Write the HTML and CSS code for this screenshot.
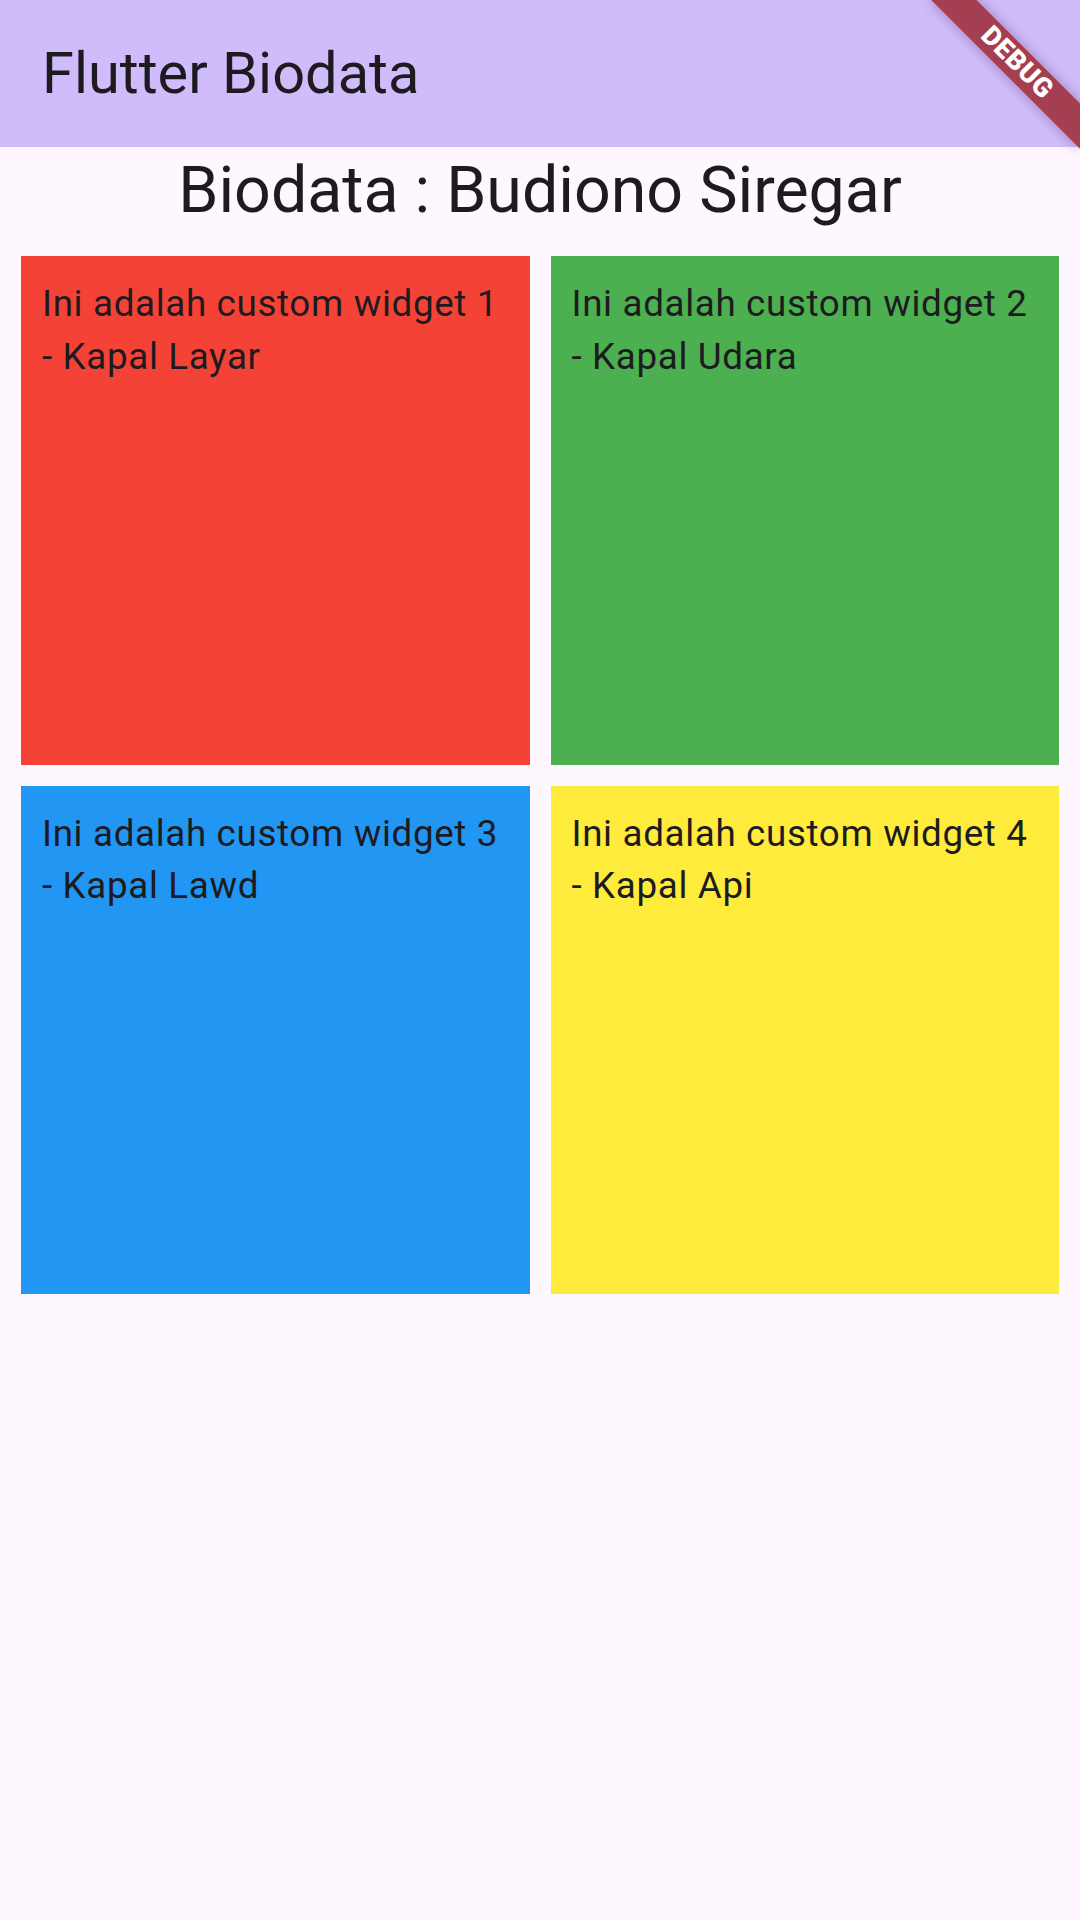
FILE: index.html
```html
<!DOCTYPE html>
<html>
<head>
<meta charset="utf-8">
<link rel="stylesheet" href="styles.css">
</head>
<body>
<div class="screen">
  <header class="appbar">
    <h1 class="appbar-title">Flutter Biodata</h1>
  </header>
  <h2 class="heading">Biodata : Budiono Siregar</h2>
  <main class="grid">
    <div class="card card-red"><p class="card-text">Ini adalah custom widget 1 - Kapal Layar</p></div>
    <div class="card card-green"><p class="card-text">Ini adalah custom widget 2 - Kapal Udara</p></div>
    <div class="card card-blue"><p class="card-text">Ini adalah custom widget 3 - Kapal Lawd</p></div>
    <div class="card card-yellow"><p class="card-text">Ini adalah custom widget 4 - Kapal Api</p></div>
  </main>
  <div class="debug-banner"><span>DEBUG</span></div>
</div>
</body>
</html>
```

FILE: styles.css
```css
html, body {
  margin: 0;
  padding: 0;
}
body {
  background: #FEF7FF;
  font-family: Roboto, "Noto Sans", sans-serif;
  color: #1D1B20;
}
.screen {
  position: relative;
  width: 1080px;
  height: 1920px;
  overflow: hidden;
  background: #FEF7FF;
}
.appbar {
  height: 147px;
  background: #D1BCFB;
  display: flex;
  align-items: center;
  padding-left: 42px;
  box-sizing: border-box;
}
.appbar-title {
  margin: 0;
  font-weight: 400;
  font-size: 57.75px;
  line-height: 1;
  color: #1D1B20;
}
.heading {
  margin: 0;
  padding-top: 1px;
  text-align: center;
  font-weight: 400;
  font-size: 64.5px;
  line-height: 84px;
  color: #1D1B20;
}
.grid {
  display: grid;
  grid-template-columns: 1fr 1fr;
  gap: 21px;
  padding: 24px 21px 21px;
}
.card {
  aspect-ratio: 1 / 1;
  padding: 22px 21px 21px;
  box-sizing: border-box;
}
.card-text {
  margin: 0;
  font-size: 36.75px;
  line-height: 52.5px;
  letter-spacing: 0.66px;
  color: #1D1B20;
}
.card-red { background: #F44336; }
.card-green { background: #4CAF50; }
.card-blue { background: #2196F3; }
.card-yellow { background: #FFEB3B; }

.debug-banner {
  position: absolute;
  left: 912px;
  top: 47px;
  width: 210px;
  height: 31.5px;
  background: #A33F50;
  box-shadow: 0 0 14px rgba(60, 20, 90, 0.35);
  transform: rotate(45deg);
  display: flex;
  align-items: center;
  justify-content: center;
}
.debug-banner span {
  color: #fff;
  font-size: 27px;
  font-weight: 900;
  line-height: 1;
  letter-spacing: 0.6px;
}
```
